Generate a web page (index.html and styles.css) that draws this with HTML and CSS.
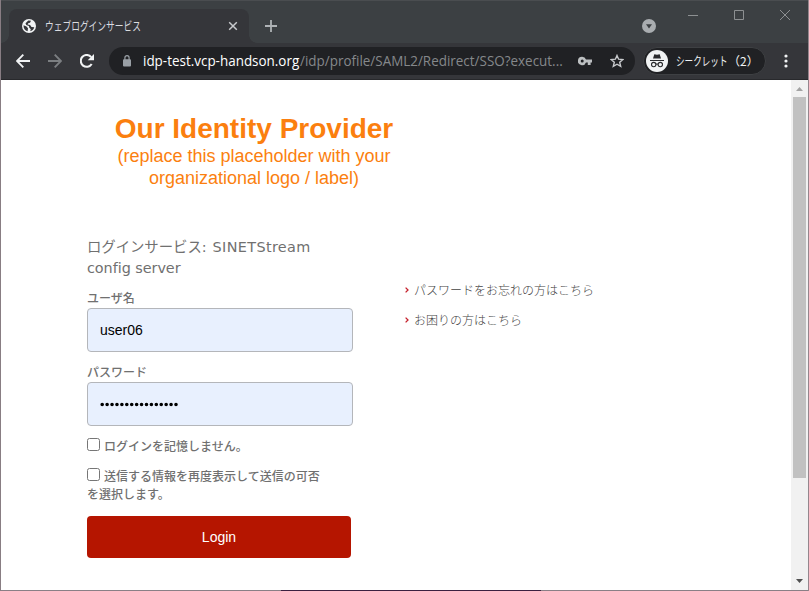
FILE: index.html
```html
<!DOCTYPE html>
<html lang="ja">
<head>
<meta charset="utf-8">
<title>ウェブログインサービス</title>
<link rel="stylesheet" href="styles.css">
</head>
<body>
<div class="window">
  <header class="tabstrip">
    <div class="tab">
      <svg class="favicon" width="14" height="14" viewBox="0 0 14 14"><circle cx="7" cy="7" r="7" fill="#f1f3f4"/><path d="M1.500 6.200 4.500 7.400 6 9.200 5.600 12.200C3 11.500 1.400 9.300 1.500 6.200ZM6.300 1.600 9 1.800 8 3.700 6.200 4.200 5.600 5.600 8.100 6 9.500 7.900 12.300 8.200C11.800 10.200 10 12 8.200 12.200L8.800 10.200 7.200 8.600 7 7.100 4.300 6.100 3.500 4.200Z" fill="#35363a"/></svg>
      <span class="tab-title"><span class="title-text">ウェブログインサービス</span></span>
      <svg class="tab-close" width="10" height="10" viewBox="0 0 10 10"><path d="M1.200 1.200 8.800 8.800M8.800 1.200 1.200 8.800" stroke="#c8cacd" stroke-width="1.500"/></svg>
    </div>
    <svg class="new-tab" width="12" height="12" viewBox="0 0 12 12"><path d="M6 0V12M0 6H12" stroke="#afb3b6" stroke-width="1.800"/></svg>
    <svg class="search-tabs" width="14" height="14" viewBox="0 0 14 14"><circle cx="7" cy="7" r="7" fill="#a9adb0"/><path d="M4 5.200H10L7 9.400Z" fill="#3c4043"/></svg>
    <svg class="controls" width="102" height="12" viewBox="0 0 102 12" fill="none" stroke="#8d9092" stroke-width="1"><path d="M0 6.500H10M46.500 1.500H55.500V10.500H46.500ZM92 1 102 11M102 1 92 11"/></svg>
  </header>
  <div class="toolbar">
    <svg class="back" width="14" height="14" viewBox="0 0 14 14" fill="none" stroke="#f1f3f4" stroke-width="1.900"><path d="M14 7H1.500M7.300 .7 1 7 7.300 13.300"/></svg>
    <svg class="forward" width="14" height="14" viewBox="0 0 14 14" fill="none" stroke="#7c7f82" stroke-width="1.900"><path d="M0 7H12.500M6.700 .7 13 7 6.700 13.300"/></svg>
    <svg class="reload" width="14" height="14" viewBox="0 0 14 14"><path d="M11.700 10A5.900 5.900 0 1 1 11.200 3.100" fill="none" stroke="#f1f3f4" stroke-width="2.100"/><path d="M14 0V6.300H7.700Z" fill="#f1f3f4"/></svg>
    <div class="address">
      <svg class="lock" width="8" height="12" viewBox="0 0 8 12"><rect y="4.200" width="8" height="7.300" rx="1" fill="#9aa0a6"/><path d="M1.900 5V2.700a2.100 2.100 0 0 1 4.200 0V5" fill="none" stroke="#9aa0a6" stroke-width="1.200"/></svg>
      <div class="url"><span class="host">idp-test.vcp-handson.org</span><span class="path">/idp/profile/SAML2/Redirect/SSO?execut...</span></div>
      <svg class="key" width="14" height="10" viewBox="0 0 14 10"><path fill-rule="evenodd" d="M4.200.8A4.200 4.200 0 1 0 8 6.500H9.800V9H12.600V6.500H14V3.500H8A4.200 4.200 0 0 0 4.200.8ZM4.200 3.500A1.500 1.500 0 1 1 4.200 6.500 1.500 1.500 0 0 1 4.200 3.500Z" fill="#bdc0c2"/></svg>
      <svg class="star" width="14" height="14" viewBox="0 0 14 14"><path d="M7 1.500 8.600 5.200 12.900 5.600 9.700 8.300 10.700 12.400 7 10.200 3.300 12.400 4.300 8.300 1.100 5.600 5.400 5.200Z" fill="none" stroke="#c8cacd" stroke-width="1.400"/></svg>
    </div>
    <div class="incognito">
      <svg width="22" height="22" viewBox="0 0 22 22"><circle cx="11" cy="11" r="11" fill="#f1f3f4"/><path d="M8.300 4.200 11 4.800 13.700 4.200 15 8.600H7ZM4 10H18V11H4Z" fill="#292a2d"/><g fill="none" stroke="#292a2d" stroke-width="1.100"><circle cx="7.700" cy="14.600" r="2.200"/><circle cx="14.300" cy="14.600" r="2.200"/><path d="M9.900 14.300Q11 13.600 12.100 14.300"/></g></svg>
      <span class="badge-text"><span class="badge-kana">シークレット</span><span class="badge-count">（2）</span></span>
    </div>
    <svg class="menu" width="4" height="14" viewBox="0 0 4 14" fill="#f1f3f4"><circle cx="2" cy="2" r="1.600"/><circle cx="2" cy="7" r="1.600"/><circle cx="2" cy="12" r="1.600"/></svg>
  </div>
  <div class="viewport">
    <main class="page">
      <div class="logo">
        <div class="logo-name">Our Identity Provider</div>
        <div class="logo-note">(replace this placeholder with your<br>organizational logo / label)</div>
      </div>
      <div class="columns">
        <form class="login">
          <h1>ログインサービス: <span class="service">SINETStream</span><br>config server</h1>
          <label class="label">ユーザ名</label>
          <div class="field">user06</div>
          <label class="label">パスワード</label>
          <div class="field"><svg width="79" height="5" viewBox="0 0 79 5"><path d="M2.200 2.500H78" stroke="#000" stroke-width="3.600" stroke-linecap="round" stroke-dasharray="0 4.920"/></svg></div>
          <div class="option"><i class="box"></i>ログインを記憶しません。</div>
          <div class="option consent"><i class="box"></i>送信する情報を再度表示して送信の可否<br>を選択します。</div>
          <button class="submit" type="button">Login</button>
        </form>
        <ul class="links">
          <li><svg width="4" height="6" viewBox="0 0 4 6"><path d="M.6.6 3 3 .6 5.400" fill="none" stroke="#c5202b" stroke-width="1.300"/></svg>パスワードをお忘れの方はこちら</li>
          <li><svg width="4" height="6" viewBox="0 0 4 6"><path d="M.6.6 3 3 .6 5.400" fill="none" stroke="#c5202b" stroke-width="1.300"/></svg>お困りの方はこちら</li>
        </ul>
      </div>
    </main>
    <div class="scrollbar">
      <svg width="17" height="17" viewBox="0 0 17 17"><path d="M5 11 8.500 7 12 11Z" fill="#a3a3a3"/></svg>
      <div class="thumb"></div>
      <svg class="down" width="17" height="17" viewBox="0 0 17 17"><path d="M5 6 8.500 10 12 6Z" fill="#505050"/></svg>
    </div>
  </div>
  <div class="edge"><span></span></div>
</div>
</body>
</html>
```
FILE: styles.css
```css
* { box-sizing: border-box; }
body { margin: 0; overflow: hidden; font-family: "Liberation Sans", "Noto Sans CJK JP", sans-serif; }
svg { display: block; flex: none; }
.window {
  width: 809px; height: 591px;
  display: grid; grid-template-rows: 43px 37px 510px 1px;
  border-left: 1px solid #887d83; border-right: 1px solid #94868d;
}
.tabstrip { display: flex; align-items: flex-start; background: #3c4043; border-top: 1px solid #4a4d50; padding-left: 8px; }
.tab {
  position: relative; width: 240px; height: 34px; margin-top: 8px; padding: 0 11px 0 13px;
  display: flex; align-items: center; background: #35363a; border-radius: 8px 8px 0 0;
}
.tab::before, .tab::after { content: ""; position: absolute; bottom: 0; width: 8px; height: 8px; }
.tab::before { left: -8px; background: radial-gradient(circle at 0 0, transparent 7.5px, #35363a 8px); }
.tab::after { right: -8px; background: radial-gradient(circle at 100% 0, transparent 7.5px, #35363a 8px); }
.tab-title { width: 184px; margin-left: 9px; font: 12px/18px "Noto Sans CJK JP", sans-serif; color: #dadce0; white-space: nowrap; }
.title-text { display: inline-block; transform: scaleX(.727); transform-origin: left; }
.tab-close { margin-left: -1px; }
.new-tab { margin: 19px 0 0 16px; }
.search-tabs { margin: 18px 0 0 365px; }
.controls { margin: 8px 0 0 32px; }
.toolbar { display: flex; align-items: center; background: #35363a; border-bottom: 1px solid #28292c; padding-left: 15px; }
.forward { margin-left: 18px; }
.reload { margin-left: 18px; }
.address { display: flex; align-items: center; width: 526px; height: 28px; margin-left: 15px; padding-left: 14px; border-radius: 14px; background: #202124; }
.url { width: 440px; margin-left: 12px; font: 14px/20px "Open Sans", sans-serif; white-space: nowrap; color: #85888b; }
.host, .path { display: inline-block; transform-origin: left; }
.host { color: #fff; width: 157px; transform: scaleX(.96); }
.path { transform: scaleX(.96); }
.key { margin-left: -5px; }
.star { margin-left: 18px; }
.incognito { display: flex; align-items: center; width: 123px; height: 28px; margin-left: 8px; padding-left: 2px; border: 1px solid #3e4043; border-radius: 14px; background: #202124; }
.badge-text { display: flex; margin-left: 8px; font: 12px/18px "Noto Sans CJK JP", sans-serif; color: #f1f3f4; white-space: nowrap; }
.badge-kana { flex: none; width: 72px; margin-right: -20px; transform: scaleX(.715); transform-origin: left; }
.badge-count { text-spacing-trim: space-all; }
.menu { margin-left: 18px; }
.viewport { display: grid; grid-template-columns: 790px 17px; background: #fff; }
.page { padding: 33px 0 0 86px; }
.logo { width: 334px; text-align: center; color: #fb7f0f; }
.logo-name { height: 32px; font-size: 28px; line-height: 31px; font-weight: bold; white-space: nowrap; }
.logo-note { font-size: 18px; line-height: 22px; }
.columns { display: flex; margin-top: 48px; }
.login { width: 266px; color: #707070; }
h1 { margin: 0; font: 14.4px/21px "DejaVu Sans", "Noto Sans CJK JP", sans-serif; letter-spacing: -.05px; white-space: nowrap; }
.service { margin-left: 1.5px; letter-spacing: .36px; }
.label { display: block; font: 500 12px/18px "Noto Sans CJK JP", sans-serif; }
h1 + .label { margin-top: 10px; height: 19px; }
.field { display: flex; align-items: center; width: 266px; height: 44px; padding-left: 12px; border: 1px solid #b4b6ba; border-radius: 4px; background: #e8f0fe; color: #000; font-size: 14px; }
.field + .label { margin-top: 11px; height: 19px; }
.option { margin-top: 11px; font: 500 12px/18px "Noto Sans CJK JP", sans-serif; white-space: nowrap; }
.consent { margin-top: 12px; }
.box { display: inline-block; width: 13px; height: 13px; margin-right: 4px; vertical-align: 0; border: 1px solid #767676; border-radius: 2.5px; background: #fff; }
.submit { display: block; width: 264px; height: 42px; margin: 13px 0 0; padding: 0; border: 0; border-radius: 4px; background: #b51500; color: #fff; font: 14px "Liberation Sans", sans-serif; }
.links { list-style: none; margin: 44px 0 0 52px; padding: 0; }
.links li { display: flex; align-items: center; gap: 5px; height: 18px; margin-bottom: 12px; font: 300 12px/18px "Noto Sans CJK JP", sans-serif; color: #444; white-space: nowrap; }
.scrollbar { display: flex; flex-direction: column; align-items: center; background: #f1f1f1; }
.thumb { width: 13px; height: 381px; margin-left: -1px; background: #c1c1c1; }
.down { margin-top: auto; }
.edge { background: #8a7f86; display: flex; padding-left: 280px; }
.edge span { width: 260px; background: #3b2040; }
```
